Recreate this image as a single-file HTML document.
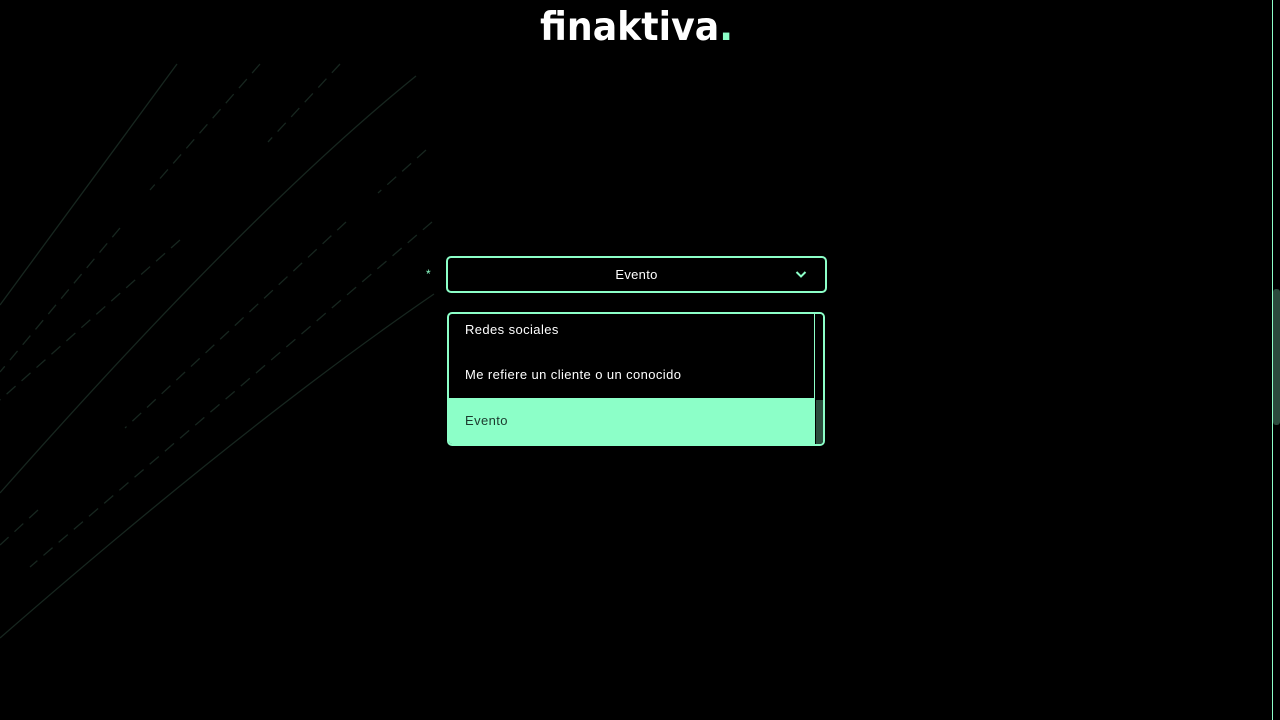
<!DOCTYPE html>
<html><head><meta charset="utf-8"><style>
html,body{margin:0;padding:0;background:#000;width:1280px;height:720px;overflow:hidden;font-family:"Liberation Sans",sans-serif;}
.logo{position:absolute;left:540px;top:5px;font-size:39px;font-weight:bold;color:#fff;letter-spacing:0;font-family:"DejaVu Sans","Liberation Sans",sans-serif;transform:scaleX(0.93);transform-origin:left top;}
.logo span{color:#8cffc8;}
.sel{position:absolute;left:446px;top:256px;width:377px;height:33px;border:2px solid #8cffc8;border-radius:5px;box-sizing:content-box;}
.sel .t{position:absolute;left:0;right:0;top:9px;text-align:center;color:#fff;font-size:13px;letter-spacing:0.3px;}
.star{position:absolute;left:426px;top:267px;color:#8cffc8;font-size:12px;}
.list{position:absolute;left:447px;top:312px;width:374px;height:130px;border:2px solid #8cffc8;border-radius:5px;overflow:hidden;}
.it{position:absolute;left:0;width:368px;height:46px;color:#fff;font-size:13px;padding-left:16px;box-sizing:border-box;letter-spacing:0.4px;}
.sb{position:absolute;right:0;top:0;width:8px;height:130px;background:#000;border-left:1px solid #8cffc8;}
.sb i{position:absolute;left:1px;right:0;top:86px;bottom:0;background:#2b4b3d;}
</style></head><body>
<svg width="1280" height="720" style="position:absolute;left:0;top:0">
<g stroke="#17261f" stroke-width="1.3" fill="none">
<path d="M177 64 L0 305"/>
<path d="M416 76 Q250 210 0 493"/>
<path d="M434 294 Q250 420 0 638"/>
<g stroke-dasharray="12 8">
<path d="M260 64 L150 190"/>
<path d="M340 64 L268 142"/>
<path d="M426 150 L378 193"/>
<path d="M346 222 L125 428"/>
<path d="M432 222 L30 567"/>
<path d="M180 240 L0 400"/>
<path d="M120 228 L0 372"/>
<path d="M38 510 L0 545"/>
</g></g>
<line x1="1272.5" y1="0" x2="1272.5" y2="720" stroke="#8cffc8" stroke-width="1"/>
<rect x="1273" y="289" width="7" height="136" rx="3" fill="#2b4b3d"/>
</svg>
<div class="logo">finaktiva<span>.</span></div>
<div class="star">*</div>
<div class="sel"><div class="t">Evento</div>
<svg style="position:absolute;right:18px;top:12px" width="12" height="9" viewBox="0 0 12 9"><path d="M1.5 2 L6 6.5 L10.5 2" stroke="#8cffc8" stroke-width="2" fill="none"/></svg></div>
<div class="list">
<div class="it" style="top:0;line-height:32px">Redes sociales</div>
<div class="it" style="top:40px;line-height:42px">Me refiere un cliente o un conocido</div>
<div class="it" style="top:84px;height:46px;line-height:46px;background:#8cffc8;color:#1c3a2e">Evento</div>
<div class="sb"><i></i></div>
</div>
</body></html>
